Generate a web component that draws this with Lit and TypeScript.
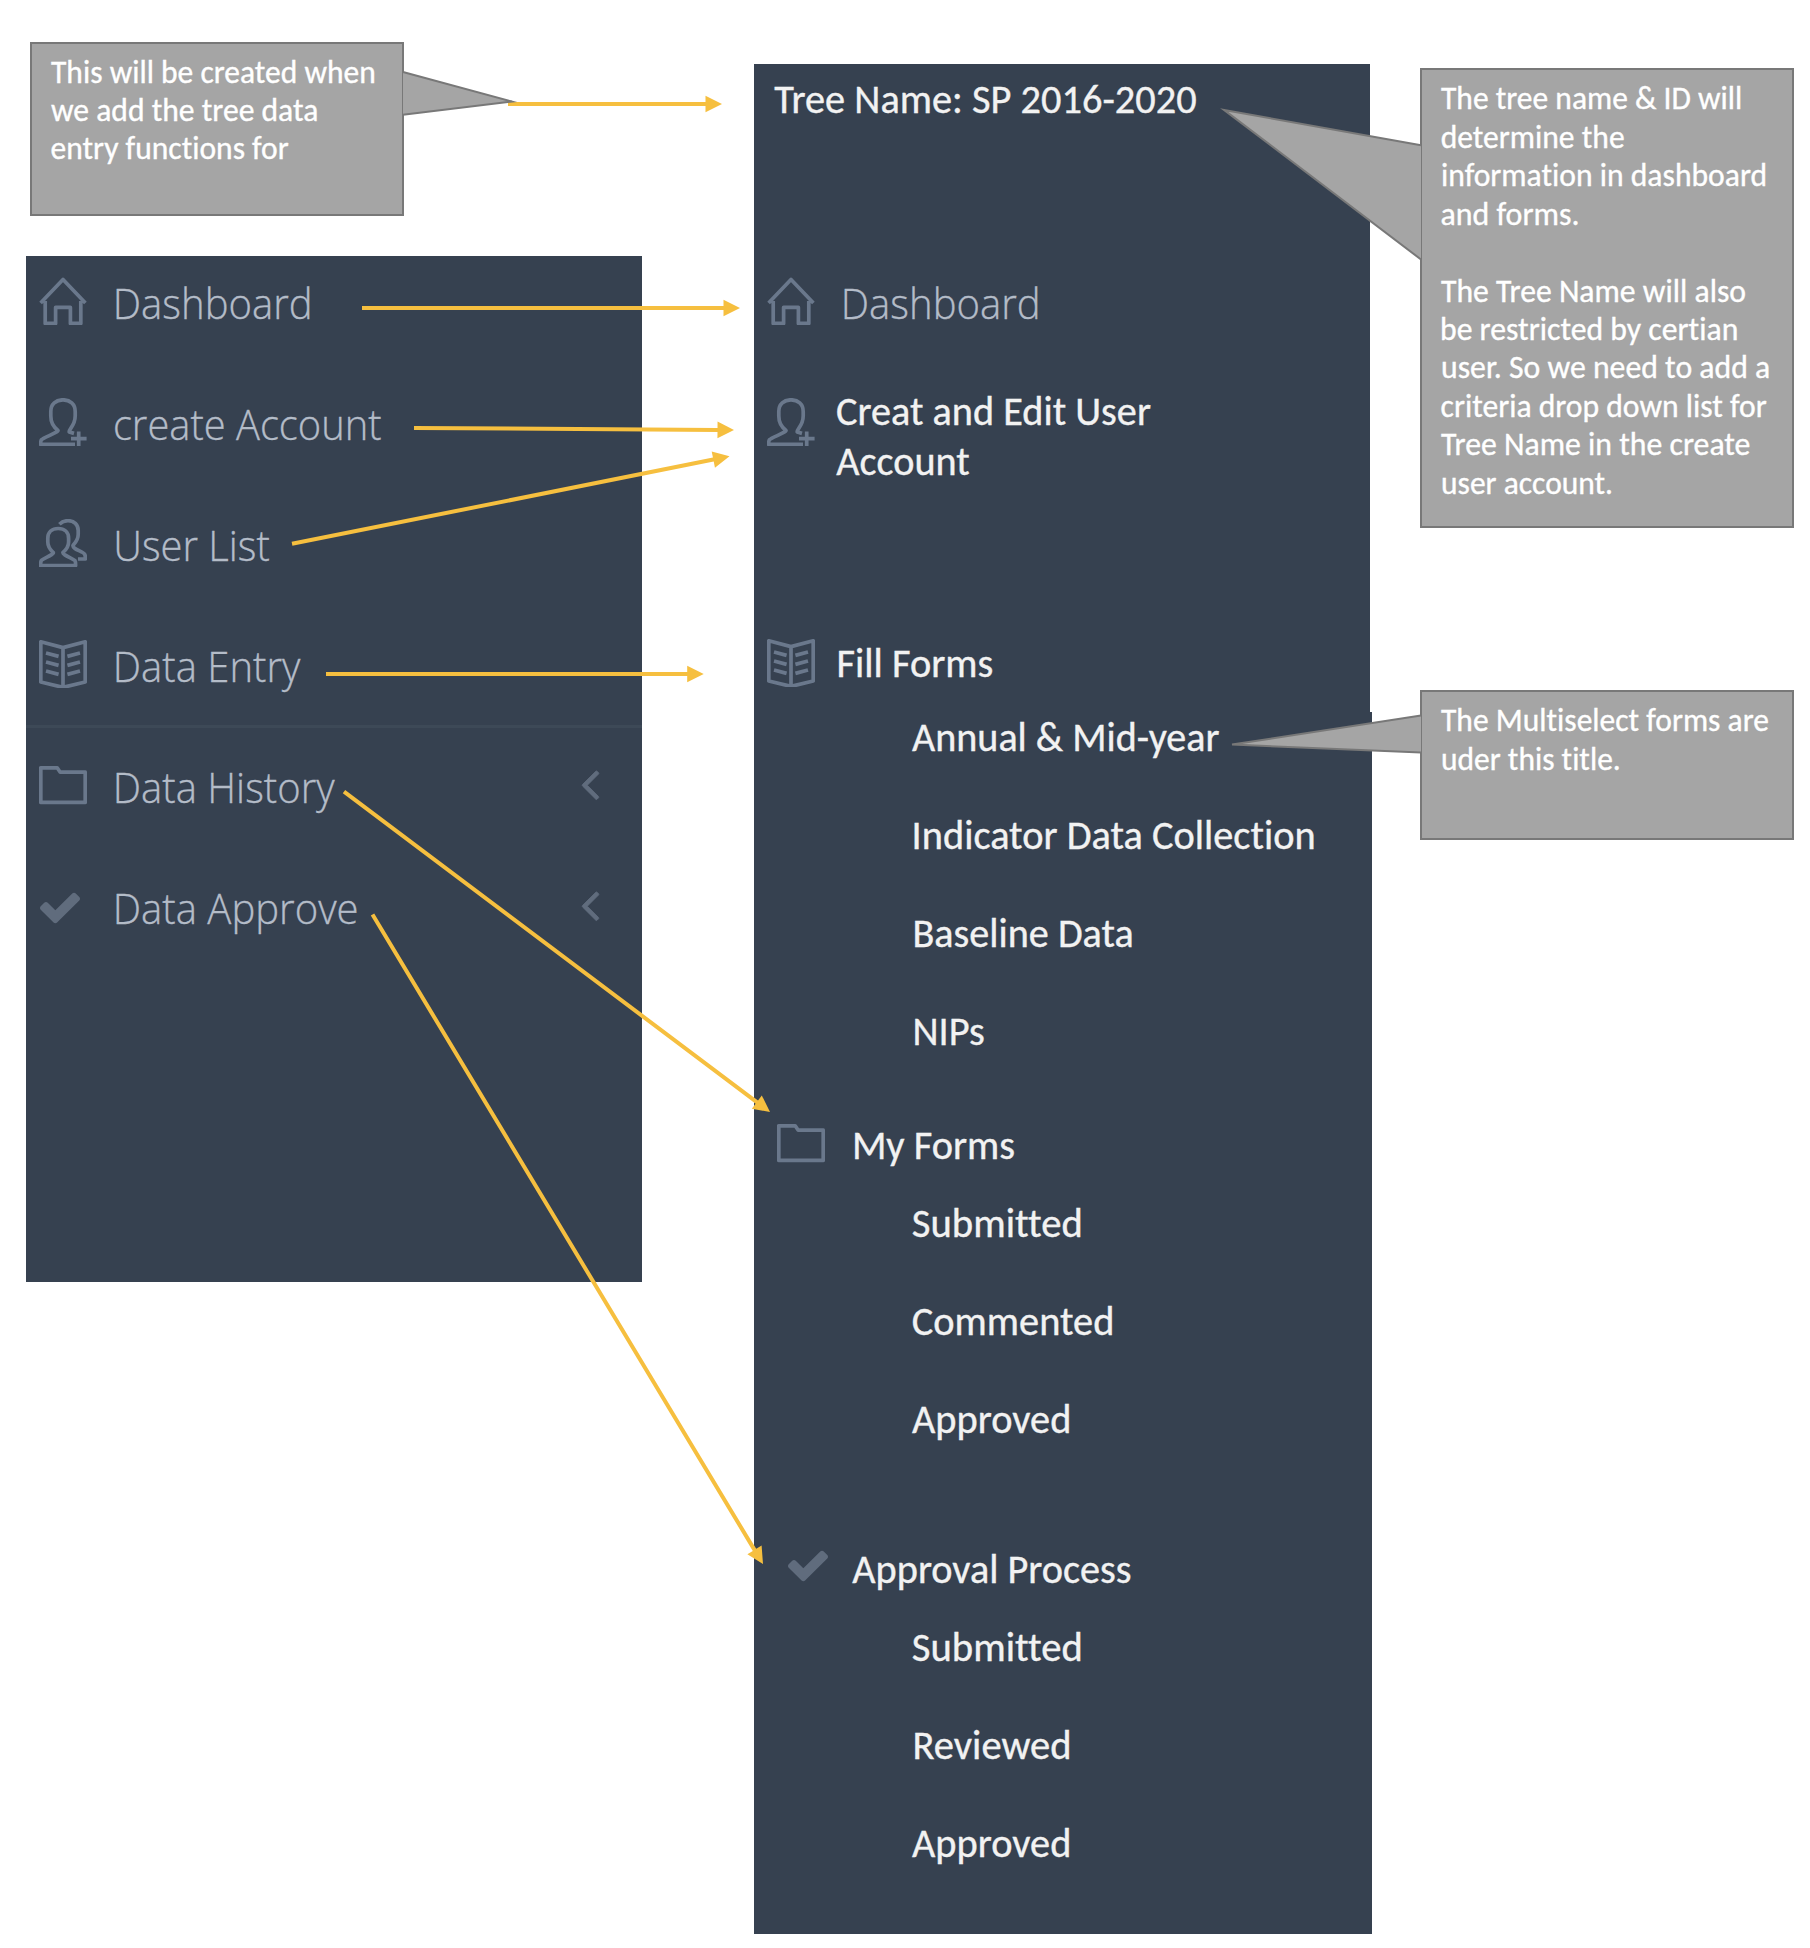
import { LitElement, html, svg, css, nothing } from "lit";
import { customElement, property } from "lit/decorators.js";
import { styleMap } from "lit/directives/style-map.js";

type Line = [text: string, inset: number, width: number];

/** One line of text whose ink starts at the element's left edge and spans `width` pixels. */
@customElement("fit-text")
class FitText extends LitElement {
  @property() text = "";
  @property({ type: Number }) width = 0;
  @property({ type: Number }) inset = 0;

  static styles = css`
    :host { display: block; white-space: nowrap; flex: none; }
    .ink { display: inline-block; transform-origin: 0 50%; font-variant-ligatures: none; letter-spacing: 0.01px; -webkit-text-stroke: 0.35px currentColor; }
  `;

  private fit() {
    const cs = getComputedStyle(this);
    const ctx = document.createElement("canvas").getContext("2d")! as CanvasRenderingContext2D & { letterSpacing: string };
    ctx.font = `${cs.fontWeight} ${cs.fontSize} ${cs.fontFamily}`;
    ctx.letterSpacing = "0.01px";
    const m = ctx.measureText(this.text);
    const scale = this.width / (m.actualBoundingBoxRight + m.actualBoundingBoxLeft);
    const shift = this.inset + m.actualBoundingBoxLeft * scale;
    return { transform: `translateX(${shift.toFixed(2)}px) scaleX(${scale.toFixed(4)})` };
  }

  render() {
    return html`<span class="ink" style=${styleMap(this.fit())}>${this.text}</span>`;
  }
}

const icons = {
  home: svg`<path d="M1.6 26 24 2.4 46.4 26M6.2 24V46.4H16.6V30.4H31.4V46.4H41.8V24"/>`,
  userPlus: svg`<path d="M35 35.4 30.2 34C29.4 31.6 36.2 27.6 36.2 18V13.4C36.2 6 31 1.8 24 1.8S11.8 6 11.8 13.4V18C11.8 25 15.6 29.8 18.8 32.2C20.6 34 4.4 39.4 2.4 41.8C1.7 42.8 1.6 44.6 1.6 46.4H36M39.7 33.4V48M32 40.7H47.6"/>`,
  users: svg`<path d="M19.2 9.5C13 9.5 8.8 13.4 8.8 19.4V23C8.8 28.6 12 31.4 14.2 33.4C15.6 35.4 3.8 39.6 2.3 41.6C1.6 42.6 1.6 44.8 1.6 46.6H36.6C36.6 44.8 36.7 42.8 36 41.6C34.6 39.6 22.8 35.8 24 33.4C26.4 31.4 29.6 28.6 29.6 23V19.4C29.6 13.4 25.4 9.5 19.2 9.5ZM20.4 5.2C22.6 3 25.6 1.7 29 1.7C35 1.7 39.2 5.6 39.2 11.4V15.6C39.2 21 36.6 23.4 34 26.4C33.2 30.2 44.6 32.6 45.8 35.4C46.4 36.8 46.4 38.4 46.4 40H39"/>`,
  book: svg`<path d="M1.8 1.8 24 7.6 46.2 1.8V42L24 47.4 1.8 42ZM24 7.6V47M7 13 19.6 16.4M7 22 19.6 25.4M7 31 19.6 34.4M41 13 28.4 16.4M41 22 28.4 25.4M41 31 28.4 34.4"/>`,
  folder: svg`<path d="M1.8 6.8H18.2L21.2 11.2H46.2V41.4H1.8Z"/>`,
};
type IconName = keyof typeof icons | "check";

const icon = (name: IconName) =>
  name === "check"
    ? html`<svg class="check" viewBox="121 334 1550 1188"><path d="M1671 566q0 40-28 68l-724 724-136 136q-28 28-68 28t-68-28l-136-136-362-362q-28-28-28-68t28-68l136-136q28-28 68-28t68 28l294 295 656-657q28-28 68-28t68 28l136 136q28 28 28 68z"/></svg>`
    : html`<svg class="line-icon" viewBox="0 0 48 48">${icons[name]}</svg>`;

const angle = html`<svg class="angle" viewBox="621 461 582 998"><path d="M1203 544q0 13-10 23l-393 393 393 393q10 10 10 23t-10 23l-50 50q-10 10-23 10t-23-10l-466-466q-10-10-10-23t10-23l466-466q10-10 23-10t23 10l50 50q10 10 10 23z"/></svg>`;

const line = ([text, inset, width]: Line) =>
  html`<fit-text .text=${text} .inset=${inset} .width=${width}></fit-text>`;

const currentMenu: { icon: IconName; label: Line; angle?: boolean; divided?: boolean }[] = [
  { icon: "home", label: ["Dashboard", 0.6, 193] },
  { icon: "userPlus", label: ["create Account", -1.2, 266.5] },
  { icon: "users", label: ["User List", 0, 153.6] },
  { icon: "book", label: ["Data Entry", 0.6, 184.3] },
  { icon: "folder", label: ["Data History", 0.6, 218.5], angle: true, divided: true },
  { icon: "check", label: ["Data Approve", 0.6, 239.8], angle: true },
];

const sections: { kind: string; icon: IconName; title: Line; items: Line[] }[] = [
  {
    kind: "fill", icon: "book", title: ["Fill Forms", 0.5, 154],
    items: [["Annual & Mid-year", 0, 307.5], ["Indicator Data Collection", 2.6, 399], ["Baseline Data", 2.5, 217], ["NIPs", 2.5, 69.5]],
  },
  {
    kind: "mine", icon: "folder", title: ["My Forms", 1.9, 159.5],
    items: [["Submitted", 0.8, 168], ["Commented", 0.8, 199.5], ["Approved", 0, 157.3]],
  },
  {
    kind: "approval", icon: "check", title: ["Approval Process", -0.7, 278.5],
    items: [["Submitted", 0.8, 168], ["Reviewed", 2.5, 155], ["Approved", 0, 157.3]],
  },
];

const createdNote: Line[] = [
  ["This will be created when", 0, 323],
  ["we add the tree data", 0, 266],
  ["entry functions for", 0.5, 237],
];
const treeNote: Line[] = [
  ["The tree name & ID will", 0, 300],
  ["determine the", 0.7, 182],
  ["information in dashboard", 1, 323.3],
  ["and forms.", 0.5, 136],
];
const treeNoteMore: Line[] = [
  ["The Tree Name will also", 0, 304.2],
  ["be restricted by certian", 1, 294.5],
  ["user. So we need to add a", 1, 327],
  ["criteria drop down list for", 0.5, 325],
  ["Tree Name in the create", 0, 308.5],
  ["user account.", 1, 169],
];
const formsNote: Line[] = [
  ["The Multiselect forms are", 0, 327],
  ["uder this title.", 1, 176.7],
];

const arrows: [number, number, number, number][] = [
  [508, 104, 722, 104],
  [362, 308, 740, 308],
  [414, 428, 734, 430],
  [292, 543.8, 729.5, 456.3],
  [326, 674, 703.7, 674],
  [344, 791.7, 770, 1112],
  [372.5, 914.5, 763, 1564],
];

const arrow = ([x1, y1, x2, y2]: [number, number, number, number]) => {
  const len = Math.hypot(x2 - x1, y2 - y1);
  const deg = (Math.atan2(y2 - y1, x2 - x1) * 180) / Math.PI;
  return svg`<path class="arrow" transform="translate(${x1} ${y1}) rotate(${deg})"
    d="M0 -2H${len - 16.5}V-8.3L${len} 0L${len - 16.5} 8.3V2H0Z"/>`;
};

@customElement("app-root")
class AppRoot extends LitElement {
  static styles = css`
    :host { display: block; }
    .board {
      position: relative; display: flex; align-items: flex-start; box-sizing: border-box;
      width: 1810px; height: 1948px; overflow: hidden; background: #fff;
      font-family: Carlito, Lato, "Open Sans", sans-serif;
    }
    .overlay { position: absolute; inset: 0; width: 1810px; height: 1948px; pointer-events: none; }
    .arrow { fill: #f6bf3f; }
    .tail { fill: #a5a5a5; stroke: #787878; stroke-width: 2; stroke-linejoin: miter; stroke-miterlimit: 8; }

    .before { width: 616px; margin: 42px 112px 0 26px; }
    .note {
      box-sizing: border-box; border: 2px solid #787878; background: #a5a5a5; color: #fff;
      font-size: 32px; line-height: 38.4px; padding: 10.4px 19px 0;
    }
    .note.created { width: 374px; height: 174px; margin-left: 4px; line-height: 38px; }
    .note.tree { height: 460px; }
    .note.forms { height: 150px; margin-top: 162px; }
    .more { margin-top: 38.6px; }

    .current {
      box-sizing: border-box; height: 1026px; margin: 40px 0 0; padding: 20px 43px 0 13px;
      background: #364150; display: flex; flex-direction: column; gap: 71px;
    }
    .item { display: flex; align-items: center; height: 50px; }
    .divided {
      margin: -35px -43px 0 -13px; padding: 32px 43px 0 13px; border-top: 3px solid #3d4957;
    }
    .item .label, .dash .label {
      flex: 1; font: 300 42.5px/54px "Open Sans", sans-serif; color: #b4bcc8; height: 50px;
    }
    .slot { display: flex; width: 77px; flex: none; }

    .line-icon { width: 48px; height: 48px; flex: none; fill: none; stroke: #6a788c; stroke-width: 3.7; stroke-linejoin: round; }
    .check { width: 40px; height: 32px; margin: 3px 0 0 1px; fill: #606c7d; }
    .angle { width: 17px; height: 28.5px; flex: none; fill: #606c7d; stroke: #606c7d; stroke-width: 30; overflow: visible; }

    .after {
      box-sizing: border-box; width: 618px; height: 1870px; margin-top: 64px; padding-top: 10px;
      background:
        linear-gradient(#364150, #364150) 0 0 / 616px 100% no-repeat,
        linear-gradient(#364150, #364150) 0 648px / 618px 1222px no-repeat;
      color: #f2f2f2; font-size: 40px; line-height: 52px;
    }
    .after fit-text { height: 50px; }
    .title { padding-left: 20px; }
    .row { display: flex; align-items: center; height: 50px; padding-left: 13px; }
    .dash { margin-top: 152px; }
    .account { align-items: flex-start; height: 100px; margin-top: 60px; }
    .account .slot { width: 69.5px; padding-top: 11.5px; }
    .subs { display: flex; flex-direction: column; gap: 48px; padding-left: 158px; margin-top: 28px; }
    .fill .row { margin-top: 152px; }
    .fill .slot { width: 70.5px; }
    .fill .subs { margin-top: 24px; }
    .mine .row { margin-top: 64px; padding-left: 23px; }
    .mine .slot { width: 76px; }
    .mine .line-icon { margin-top: -4px; }
    .approval .row { margin-top: 100px; padding-left: 34px; }
    .approval .slot { width: 65px; }
    .approval .check { margin: -6px 0 0; }

    .notes { width: 374px; margin: 68px 0 0 48px; }
  `;

  render() {
    return html`
      <main class="board">
        <div class="before">
          <section class="note created">${createdNote.map(line)}</section>
          <nav class="current">
            ${currentMenu.map(
              (m) => html`<div class="item ${m.divided ? "divided" : ""}">
                <span class="slot">${icon(m.icon)}</span>
                <span class="label">${line(m.label)}</span>
                ${m.angle ? angle : nothing}
              </div>`
            )}
          </nav>
        </div>

        <nav class="after">
          <div class="title">${line(["Tree Name: SP 2016-2020", 0.3, 422])}</div>
          <div class="row dash">
            <span class="slot">${icon("home")}</span>
            <span class="label">${line(["Dashboard", 0.6, 193])}</span>
          </div>
          <div class="row account">
            <span class="slot">${icon("userPlus")}</span>
            <div>${line(["Creat and Edit User", 0, 314])}${line(["Account", -0.7, 133])}</div>
          </div>
          ${sections.map(
            (s) => html`<section class=${s.kind}>
              <div class="row"><span class="slot">${icon(s.icon)}</span>${line(s.title)}</div>
              <div class="subs">${s.items.map(line)}</div>
            </section>`
          )}
        </nav>

        <aside class="notes">
          <section class="note tree">
            ${treeNote.map(line)}
            <div class="more">${treeNoteMore.map(line)}</div>
          </section>
          <section class="note forms">${formsNote.map(line)}</section>
        </aside>

        <svg class="overlay" viewBox="0 0 1810 1948">
          ${arrows.map(arrow)}
          <path class="tail" d="M403 72 512 101.5 403 114.7"/>
          <path class="tail" d="M1421 145.3 1224 109.9 1421 259.5"/>
          <path class="tail" d="M1421 715.5 1232 744.6 1421 752.6"/>
        </svg>
      </main>
    `;
  }
}
